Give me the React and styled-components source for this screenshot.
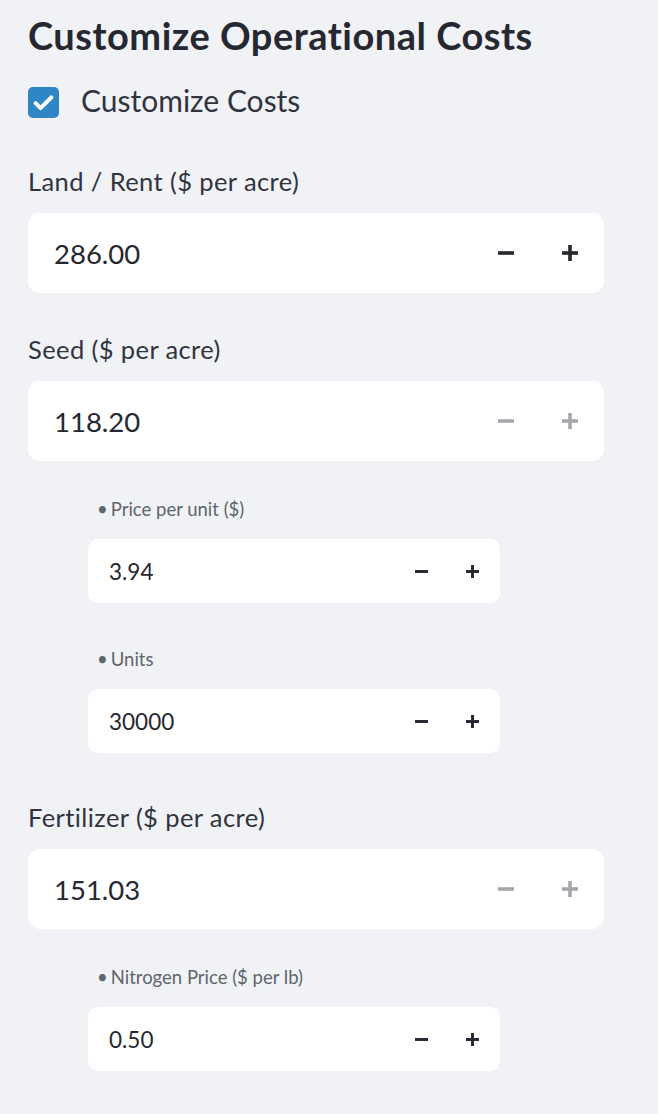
import styled, { createGlobalStyle } from "styled-components";

const GlobalStyle = createGlobalStyle`
  html, body {
    margin: 0;
    padding: 0;
    background: #f0f2f6;
  }
  body {
    font-family: "Source Sans Pro", Lato, "Noto Sans", sans-serif;
    color: #31333f;
  }
`;

const Page = styled.div`
  width: 658px;
  min-height: 1114px;
  box-sizing: border-box;
  padding: 11px 54px 0 28px;
  display: flex;
  flex-direction: column;
`;

const Title = styled.h2`
  margin: 0 0 27px 0;
  font-size: 38px;
  font-weight: 700;
  line-height: 48px;
  color: #262730;
  letter-spacing: 0.5px;
`;

const CheckRow = styled.label`
  display: flex;
  align-items: center;
  gap: 22px;
  height: 32px;
  margin-bottom: 43px;
  font-size: 30px;
  line-height: 32px;
  color: #31333f;
`;

const CheckText = styled.span`
  padding-bottom: 4px;
`;

const Box = styled.span`
  width: 31px;
  height: 31px;
  border-radius: 5px;
  background: #2f86c7;
  display: flex;
  align-items: center;
  justify-content: center;
`;

const Field = styled.div`
  display: flex;
  flex-direction: column;
  margin-left: ${(p) => (p.$sub ? "60px" : "0")};
  margin-top: ${(p) => (p.$sub ? "0" : "4px")};
  width: ${(p) => (p.$sub ? "412px" : "576px")};
  margin-bottom: ${(p) => (p.$sub ? "44px" : "36px")};
`;

const Label = styled.div`
  font-size: ${(p) => (p.$sub ? "18.5px" : "25.5px")};
  letter-spacing: ${(p) => (p.$sub ? "0" : "0.4px")};
  color: ${(p) => (p.$sub ? "#62646c" : "#31333f")};
  line-height: ${(p) => (p.$sub ? "24px" : "32px")};
  margin-bottom: ${(p) => (p.$sub ? "18px" : "16px")};
  padding-left: ${(p) => (p.$sub ? "9px" : "0")};
`;

const Bullet = styled.span`
  margin-right: 3px;
`;

const InputBox = styled.div`
  display: flex;
  align-items: center;
  height: ${(p) => (p.$sub ? "64px" : "80px")};
  background: #ffffff;
  border-radius: ${(p) => (p.$sub ? "10px" : "12px")};
  padding-left: ${(p) => (p.$sub ? "21px" : "26px")};
  padding-right: 2px;
  box-sizing: border-box;
`;

const Value = styled.div`
  flex: 1;
  font-size: ${(p) => (p.$sub ? "22.5px" : "27.5px")};
  color: #262730;
`;

const StepButton = styled.button`
  border: none;
  background: transparent;
  padding: 0;
  width: ${(p) => (p.$sub ? "51px" : "64px")};
  height: 100%;
  display: flex;
  align-items: center;
  justify-content: center;
  color: ${(p) => (p.$disabled ? "#a6a7ac" : "#262730")};
  cursor: pointer;
`;

const Minus = ({ size }) => (
  <svg width={size} height={size} viewBox="0 0 16 16">
    <rect x="0" y="6.2" width="16" height="3.6" fill="currentColor" />
  </svg>
);

const Plus = ({ size }) => (
  <svg width={size} height={size} viewBox="0 0 16 16">
    <rect x="0" y="6.2" width="16" height="3.6" fill="currentColor" />
    <rect x="6.2" y="0" width="3.6" height="16" fill="currentColor" />
  </svg>
);

const NumberInput = ({ label, value, sub, disabled }) => (
  <Field $sub={sub}>
    <Label $sub={sub}>
      {sub && <Bullet>•</Bullet>}
      {label}
    </Label>
    <InputBox $sub={sub}>
      <Value $sub={sub}>{value}</Value>
      <StepButton $sub={sub} $disabled={disabled}>
        <Minus size={sub ? 13 : 16} />
      </StepButton>
      <StepButton $sub={sub} $disabled={disabled}>
        <Plus size={sub ? 13 : 16} />
      </StepButton>
    </InputBox>
  </Field>
);

const App = () => (
  <>
    <GlobalStyle />
    <Page>
      <Title>Customize Operational Costs</Title>
      <CheckRow>
        <Box>
          <svg width="27" height="27" viewBox="0 0 24 24">
            <path d="M5 12.6l4.4 4.4L19 7.4" fill="none" stroke="#fff" strokeWidth="3.6" strokeLinecap="round" strokeLinejoin="round" />
          </svg>
        </Box>
        <CheckText>Customize Costs</CheckText>
      </CheckRow>
      <NumberInput label="Land / Rent ($ per acre)" value="286.00" />
      <NumberInput label="Seed ($ per acre)" value="118.20" disabled />
      <NumberInput label="Price per unit ($)" value="3.94" sub />
      <NumberInput label="Units" value="30000" sub />
      <NumberInput label="Fertilizer ($ per acre)" value="151.03" disabled />
      <NumberInput label="Nitrogen Price ($ per lb)" value="0.50" sub />
    </Page>
  </>
);

export default App;
